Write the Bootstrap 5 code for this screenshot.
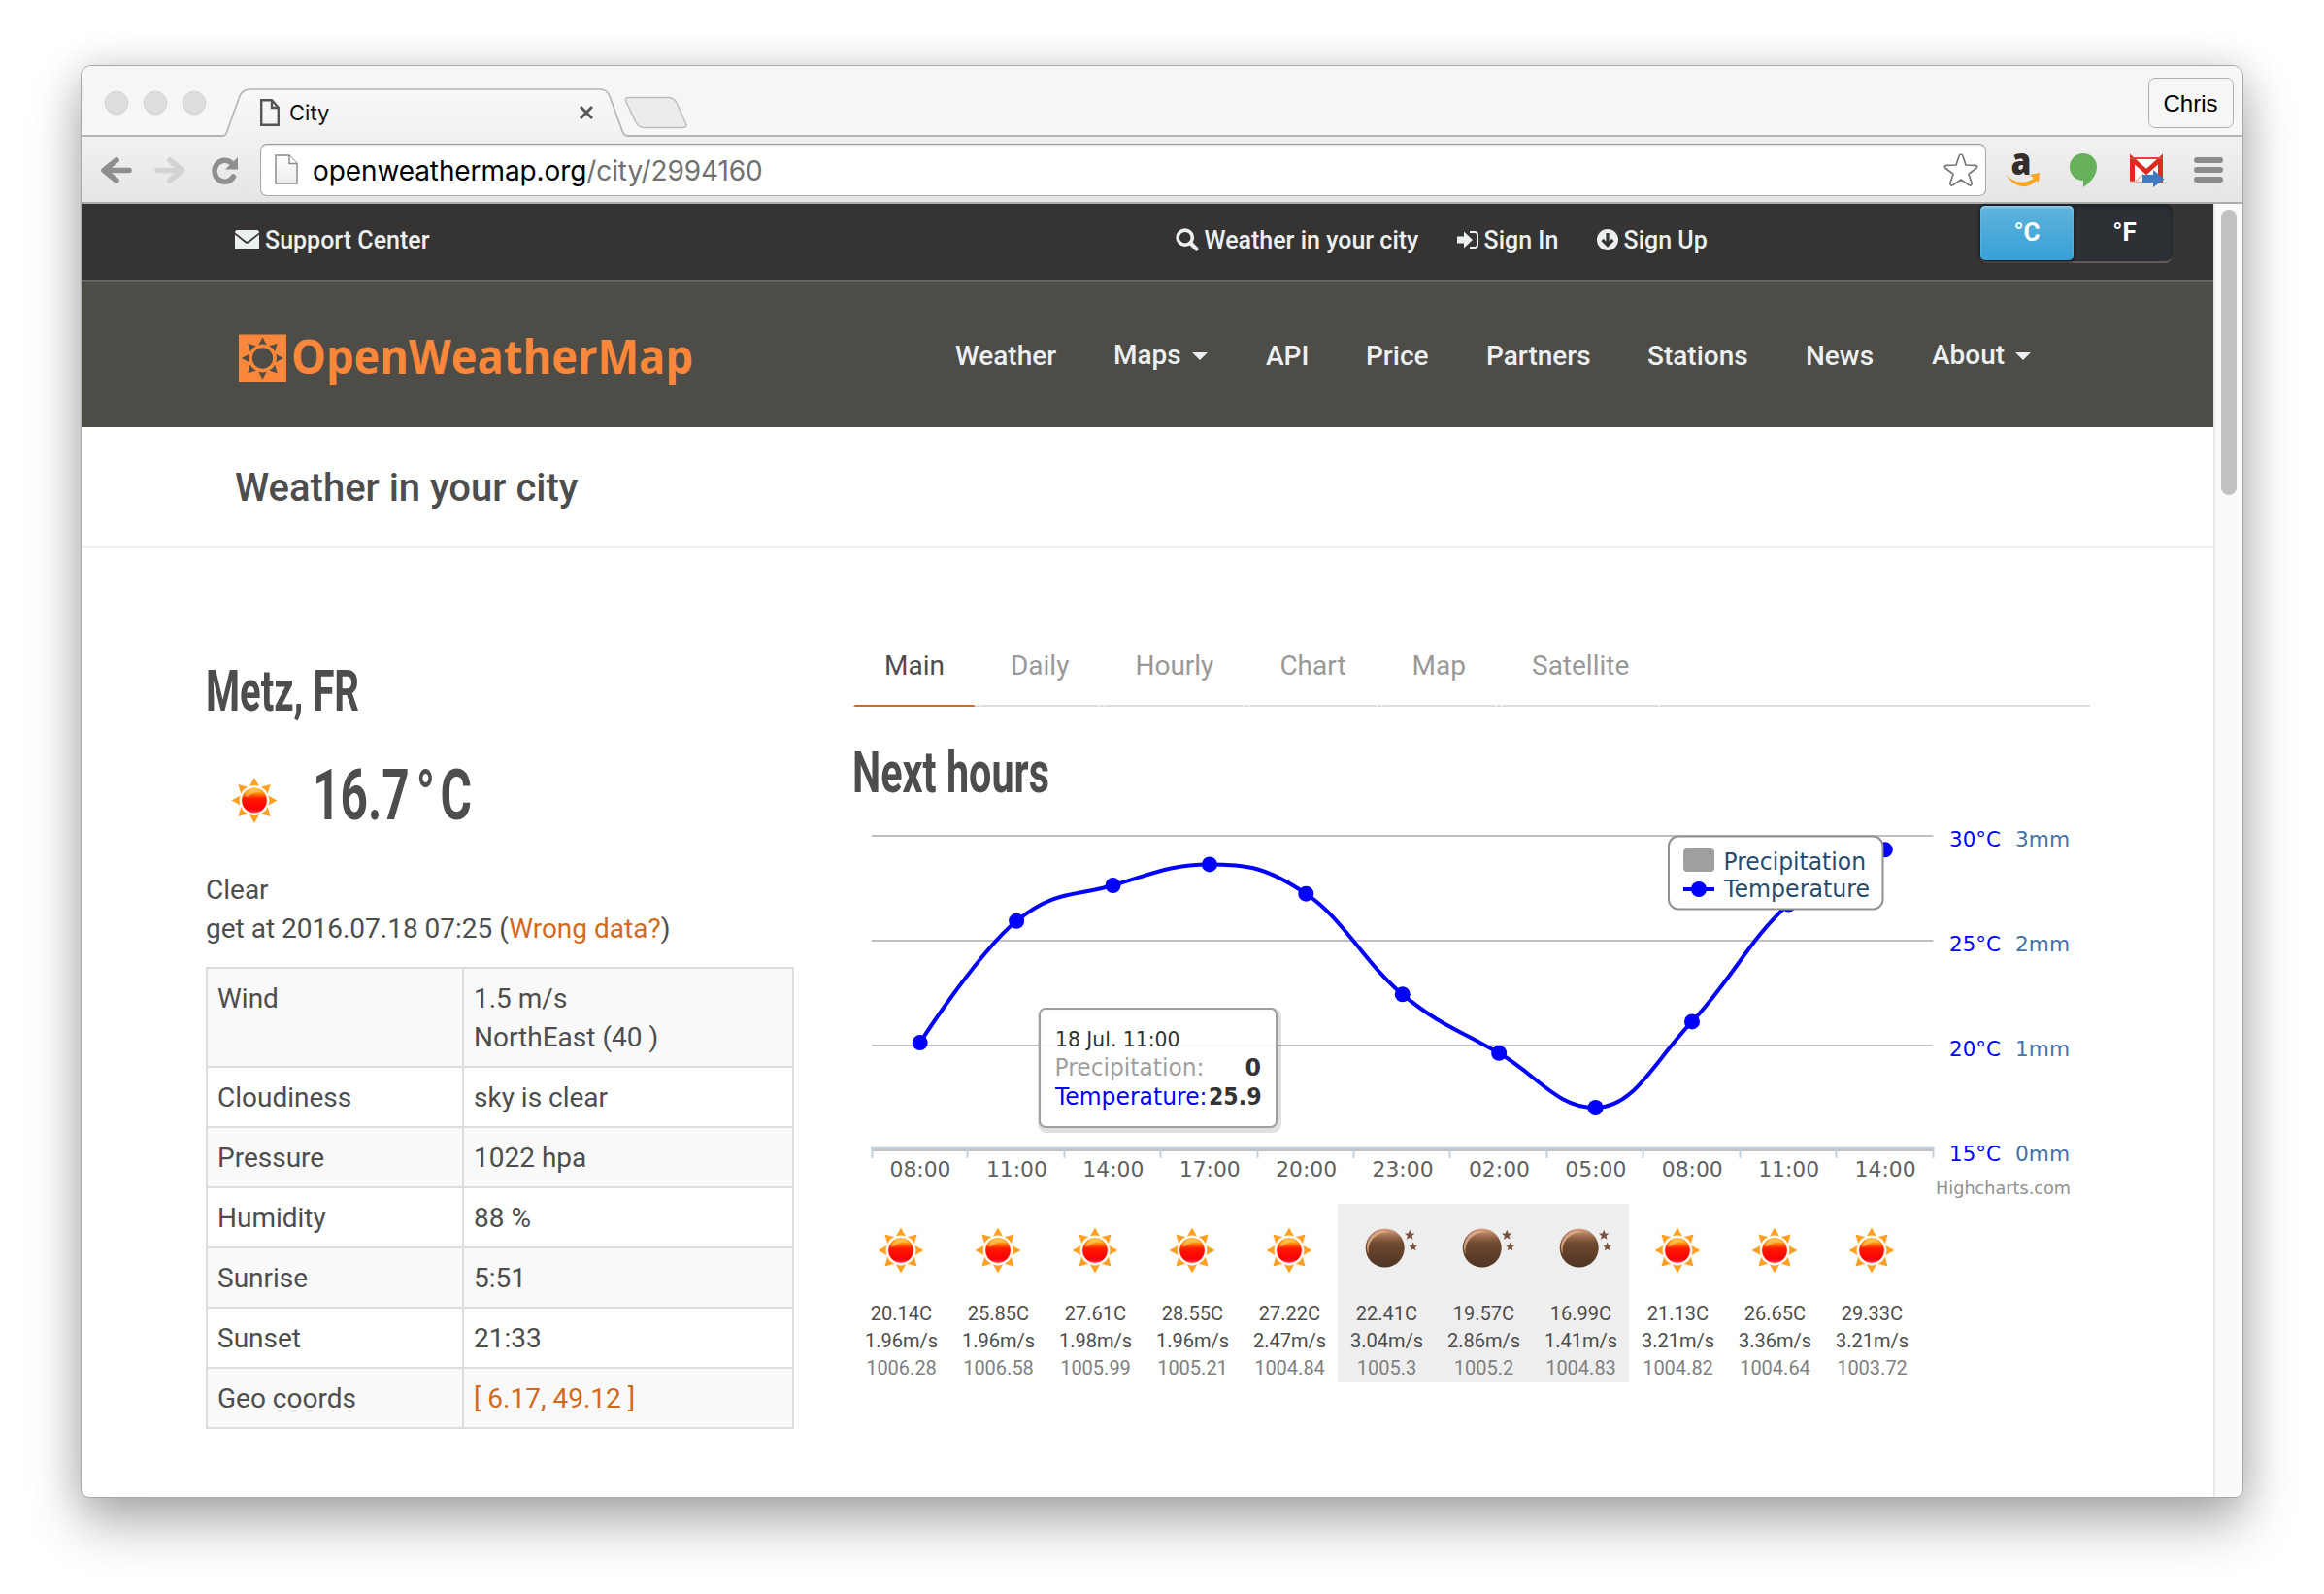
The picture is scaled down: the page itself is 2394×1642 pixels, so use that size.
<!DOCTYPE html>
<html lang="en">
<head>
<meta charset="utf-8">
<title>City</title>
<link href="https://cdn.jsdelivr.net/npm/bootstrap@5.3.0/dist/css/bootstrap.min.css" rel="stylesheet">
<style>
body{margin:0;background:#fff;width:2394px;height:1642px;overflow:hidden;padding:67px 83px 0 83px;font-family:Roboto,sans-serif;font-size:28px;line-height:40px;color:#4d4d4d}
svg{display:block;flex:none;overflow:visible}
a{text-decoration:none}
.win{width:2228px;height:1476px;border:1px solid #a9a9a9;border-radius:11px 11px 9px 9px;background:#fff;overflow:hidden;box-shadow:0 26px 54px rgba(0,0,0,.31),0 0 40px rgba(0,0,0,.12)}
.tabstrip{height:73px;background:#f6f6f6;border-bottom:2px solid #b3b3b3;position:relative}
.tabart{position:absolute;left:0;top:0}
.tabstrip .face{position:relative;padding:12px 9px 0 184px}
.docicon{margin-top:22px}
.tabtitle{font:22px/26px Inter,sans-serif;color:#111;margin:23px 0 0 10px}
.tabclose{margin:29px 0 0 257px}
.user{width:88px;height:52px;border:1.5px solid #b0b0b0;border-radius:7px;font:24px/52px "Liberation Sans",sans-serif;color:#000;text-align:center;padding-right:1px}
.toolbar{height:69px;border-bottom:2px solid #acacac;background:linear-gradient(#f1f1f1,#e5e5e5);padding:7px 18px 0 20px}
.omni{width:1778px;height:54px;border:1.5px solid #aaa;border-top-color:#999;border-radius:7px;background:#fff;padding:0 7px 0 14px;font-family:Inter,sans-serif;font-size:28px;color:#707070;box-shadow:inset 0 1px 2px rgba(0,0,0,.12)}
.omni b{font-weight:400;color:#000}
.url{margin-left:15px;letter-spacing:-.1px;line-height:50px;padding-top:1px}
.view{flex:1}
.pg{width:2196px}
.scroller{width:30px;border-left:2px solid #e8e8e8;background:#fafafa;padding:6px 0 0 6px}
.thumb{width:16px;height:294px;border-radius:8px;background:#c1c1c1}
.topbar{height:80px;background:#353432;border-bottom:2px solid #666;color:#ecf0f1;font-size:25px;font-weight:500;line-height:30px;padding-left:158px}
.topbar a,.mainnav a{color:#ecf0f1}
.topbar .ln{margin-top:22px;height:30px;white-space:nowrap}
.topbar .find{margin-left:768px}
.topbar .ln a{margin-left:6px;padding-top:2px}
.units{width:199px;height:61px;margin-left:auto;margin-right:42px;border-radius:8px;background:#2d3035;border-bottom:2px solid #5d5c5a;box-shadow:inset 0 3px 5px rgba(0,0,0,.3);font-size:26px;font-weight:700;color:#fff;padding:2px 0 0 1px}
.units span{line-height:55px;text-align:center}
.units .off{padding-left:3px}
.units .on{width:96px;height:56px;border-radius:5px;background:linear-gradient(#5fb3dc,#37a1d6);box-shadow:0 1px 4px #111,inset 0 2px 2px #8ccbe8}
.head{height:150px;background:#4d4c47;padding:54px 0 0 162px}
.mainnav{font-weight:500;font-size:28px;line-height:32px;height:32px;margin:7px 0 0 268px}
.mainnav a{flex:none;white-space:nowrap}
.mainnav a.drop{margin-top:-1px}
.caretd{display:inline-block;border:8px solid transparent;border-top-color:#ecf0f1;border-bottom:0;margin-left:11px;vertical-align:4px}
.titlebar{height:124px;border-bottom:2px solid #eee;padding-left:158px;font-size:40px;font-weight:500;line-height:126px;margin:0;color:#4d4d4d}
.left{width:606px;margin-left:128px}
.right{width:1274px;margin-left:61px}
.wtable{width:606px;margin:20px 0 0;color:#4d4d4d;border-collapse:collapse;--bs-table-bg:transparent}
.wtable td{border:2px solid #ddd;padding:11px 10px 9px;line-height:40px;background:#fff}
.wtable td:first-child{width:264px}
.wtable tr:nth-child(odd) td{background:#f9f9f9}
.orange,.wtable td.orange{color:#d26a1e}
.tabs{padding:0;margin:91px 0 0;list-style:none;border-bottom:2px solid #ddd;height:73px;color:#999}
.tabs li{padding:9px 30px 0;height:73px;margin-right:4px;line-height:40px;border:2px solid #fff;border-bottom-color:#ddd}
.tabs li.on{color:#4d4d4d;border-bottom-color:#d26a1e}
.cell{width:100px;height:184px;text-align:center;font-size:20px;line-height:28px;padding:24px 0 0 1px;white-space:nowrap;flex:none}
.cell.night{background:#eee}
.cell svg{margin:0 0 27px 25px}
.cell .pr{color:#808080}
svg text{white-space:pre}
</style>
<script src="https://cdn.jsdelivr.net/npm/bootstrap@5.3.0/dist/js/bootstrap.bundle.min.js"></script>
</head>
<body>
<svg width="0" height="0" class="position-absolute">
<defs>
<linearGradient id="sg" x1="0" y1="0" x2="0" y2="1"><stop offset="0" stop-color="#ffc040"/><stop offset=".22" stop-color="#ff8c08"/><stop offset=".42" stop-color="#ff1c00"/><stop offset=".85" stop-color="#fb0006"/><stop offset="1" stop-color="#ff3a5c"/></linearGradient>
<linearGradient id="mg" x1="0" y1="0" x2="0" y2="1"><stop offset="0" stop-color="#d7a17e"/><stop offset=".22" stop-color="#96664a"/><stop offset=".38" stop-color="#70492f"/><stop offset="1" stop-color="#4f3423"/></linearGradient>
<linearGradient id="fold" x1="0" y1="0" x2="0" y2="1"><stop offset="0" stop-color="#fff"/><stop offset="1" stop-color="#ececec"/></linearGradient>
<linearGradient id="tb" x1="0" y1="0" x2="0" y2="1"><stop offset="0" stop-color="#f8f8f8"/><stop offset="1" stop-color="#f1f1f1"/></linearGradient>
<symbol id="sun" viewBox="-24 -24 48 48" overflow="visible">
<g fill="#ff9f20"><path id="ray" d="M0-23.500L5-14.400Q0-16.400-5-14.400Z"/><use href="#ray" transform="rotate(45)"/><use href="#ray" transform="rotate(90)"/><use href="#ray" transform="rotate(135)"/><use href="#ray" transform="rotate(180)"/><use href="#ray" transform="rotate(225)"/><use href="#ray" transform="rotate(270)"/><use href="#ray" transform="rotate(315)"/></g>
<circle r="13.600" fill="#ffdcc0"/><circle r="12.800" fill="url(#sg)"/><path d="M-10-4Q-8-11 0-11.500Q6-11 8-8Q0-10-7-4Z" fill="#ffe08a" opacity=".45"/>
</symbol>
<symbol id="moon" viewBox="-24 -24 48 48" overflow="visible">
<circle cx="-1.300" cy="-2.400" r="20" fill="url(#mg)"/><path d="M-18 5A17 17 0 0 1 4-18.500A19.300 19.300 0 0 0-18 5Z" fill="#e3b493" opacity=".8"/>
<g fill="#76503a"><path id="st" d="M24.200-21.200L25.700-17.600L29.400-17.400L26.500-15L27.500-11.200L24.200-13.300L20.900-11.200L21.900-15L19-17.400L22.700-17.600Z"/><use href="#st" transform="translate(6.600 10) scale(.87)"/></g>
</symbol>
</defs>
</svg>

<div class="win d-flex flex-column">
  <div class="tabstrip flex-shrink-0">
    <svg class="tabart" width="640" height="75" viewBox="84 68 640 75">
      <g fill="#dedede" stroke="#cfcfcf"><circle cx="120" cy="106" r="11.700"/><circle cx="160" cy="106" r="11.700"/><circle cx="200" cy="106" r="11.700"/></g>
      <path d="M228 141C233 141 233 138 235 132L247 99Q250 92 258 92H618Q625 92 628 99L640 132C642 138 643 141 649 141V143.500H228Z" fill="url(#tb)"/>
      <path d="M226 140.500C233 140.500 233 138 235 132L247 99Q250 92 258 92H618Q625 92 628 99L640 132C642 138 643 140.500 649 140.500" fill="none" stroke="#b5b5b5" stroke-width="1.700"/>
      <path d="M648 100.500H688Q694 100.500 697 106L706 126Q709 131.500 703 131.500H664Q658 131.500 655 126L645 105Q643 100.500 648 100.500Z" fill="#ececec" stroke="#bdbdbd" stroke-width="1.500"/>
    </svg>
    <div class="face d-flex align-items-start">
      <svg class="docicon" width="20" height="28" viewBox="0 0 20 28"><path d="M1.200 1.200H12L18.800 9V26.800H1.200ZM12 1.200V9H18.800" fill="none" stroke="#555" stroke-width="2.400"/></svg>
      <span class="tabtitle">City</span>
      <svg class="tabclose" width="16" height="14" viewBox="0 0 16 14"><path d="M2 1L14 13M14 1L2 13" stroke="#5a5a5a" stroke-width="3"/></svg>
      <div class="user ms-auto">Chris</div>
    </div>
  </div>
  <div class="toolbar d-flex align-items-start flex-shrink-0">
    <svg width="164" height="54" viewBox="104 148 164 54">
      <path d="M120 165L107 175.500L120 186M108 175.500H133" fill="none" stroke="#8f8f8f" stroke-width="5.600" stroke-linecap="round" stroke-linejoin="round"/>
      <path d="M175 165L188 175.500L175 186M187 175.500H162" fill="none" stroke="#d3d3d3" stroke-width="5.600" stroke-linecap="round" stroke-linejoin="round"/>
      <path d="M238.500 168A10.500 11 0 1 0 240.500 182" fill="none" stroke="#8f8f8f" stroke-width="5.500" stroke-linecap="round"/><path d="M245 162V174.500H232Z" fill="#8f8f8f"/>
    </svg>
    <div class="omni d-flex align-items-center">
      <svg width="24" height="32" viewBox="0 0 24 32"><path d="M1 1H15L23 9.500V30H1Z" fill="url(#fold)" stroke="#8c8c8c" stroke-width="1.500"/><path d="M15 1V9.500H23" fill="#fff" stroke="#8c8c8c" stroke-width="1.500"/></svg>
      <span class="url"><b>openweathermap.org</b>/city/2994160</span>
      <svg class="ms-auto" width="36" height="36" viewBox="0 0 36 36"><path d="M18 2Q19.500 2 20 4L23 13L32.500 13.300Q36.500 13.800 33.500 16.500L26 22.300L29 31.500Q29.500 35 26 33.500L18 28L10 33.500Q6.500 35 7 31.500L10 22.300L2.500 16.500Q-.5 13.800 3.500 13.300L13 13L16 4Q16.500 2 18 2Z" fill="#fff" stroke="#777" stroke-width="1.700"/></svg>
    </div>
    <svg width="246" height="54" viewBox="2046 148 246 54">
      <text x="2071.500" y="180" font-family="Open Sans,sans-serif" font-weight="800" font-size="39" fill="#332d2d" textLength="21" lengthAdjust="spacingAndGlyphs">a</text>
      <path d="M2066 180Q2080 193 2095 184L2091 180L2101 178L2100 188L2098 186Q2081 201 2066 180Z" fill="#f9a51f"/>
      <path d="M2146 158A14 14 0 0 1 2160 172C2160 181 2153 188 2146 193V186A14 14 0 0 1 2146 158Z" fill="#68b15b"/>
      <rect x="2194" y="162" width="34" height="26" fill="#fff"/><path d="M2196.500 188V164L2211 177L2225.500 164V188" fill="none" stroke="#e02a20" stroke-width="5"/><path d="M2194 163H2228" stroke="#e0443a" stroke-width="2"/><path d="M2199 187.500L2208 179M2194 187.300H2208" stroke="#e8b5b0" stroke-width="1.500"/>
      <path d="M2207 180H2218V175L2229.500 184.500L2218 193V188H2207Z" fill="#4179c0"/>
      <g fill="#8b8b8b"><rect x="2260" y="162" width="30" height="6" rx="3"/><rect x="2260" y="172" width="30" height="6" rx="3"/><rect x="2260" y="182" width="30" height="6" rx="3"/></g>
    </svg>
  </div>

  <div class="view d-flex">
    <div class="pg">
      <div class="topbar d-flex">
        <div class="ln d-flex align-items-center">
          <svg width="25" height="20" viewBox="0 0 25 20"><path d="M0 4.500V18Q0 20 2 20H23Q25 20 25 18V4.500L14.500 13Q12.500 14.300 10.500 13Z" fill="#ecf0f1"/><path d="M2 0H23Q25 0 25 2.500L14 11Q12.500 12 11 11L0 2.500Q0 0 2 0Z" fill="#ecf0f1"/></svg>
          <a href="#">Support Center</a>
        </div>
        <div class="ln find d-flex align-items-center">
          <svg width="24" height="24" viewBox="0 0 24 24"><circle cx="9.700" cy="9.700" r="7.600" fill="none" stroke="#ecf0f1" stroke-width="3.600"/><path d="M15.500 15.500L21.500 21.500" stroke="#ecf0f1" stroke-width="4.200" stroke-linecap="round"/></svg>
          <a href="#" style="width:260px">Weather in your city</a>
          <svg width="22" height="18" viewBox="0 0 22 18"><path d="M0 5.500H7V.5L16 9L7 17.500V12.500H0Z" fill="#ecf0f1"/><path d="M13 1H18Q21 1 21 4V14Q21 17 18 17H13" fill="none" stroke="#ecf0f1" stroke-width="2"/></svg>
          <a href="#" style="width:116px">Sign In</a>
          <svg width="22" height="22" viewBox="0 0 22 22"><circle cx="11" cy="11" r="11" fill="#ecf0f1"/><path d="M11 4V15M5.500 11L11 16.500L16.500 11" fill="none" stroke="#353432" stroke-width="3.200"/></svg>
          <a href="#">Sign Up</a>
        </div>
        <div class="units d-flex"><span class="on">°C</span><span class="off flex-fill">°F</span></div>
      </div>
      <div class="head d-flex">
        <svg width="470" height="60" viewBox="246 344 470 60">
          <rect x="246" y="344.500" width="49" height="49" fill="#fa873a"/>
          <g transform="translate(270.500 369)"><g fill="#4d4c47"><circle r="10.700"/><path id="lr" d="M0-21.500L4.300-13.500Q0-15.500-4.300-13.500Z"/><use href="#lr" transform="rotate(45)"/><use href="#lr" transform="rotate(90)"/><use href="#lr" transform="rotate(135)"/><use href="#lr" transform="rotate(180)"/><use href="#lr" transform="rotate(225)"/><use href="#lr" transform="rotate(270)"/><use href="#lr" transform="rotate(315)"/></g></g>
          <text x="300" y="385" font-family="Open Sans,sans-serif" font-weight="700" font-size="48" fill="#fa873a" textLength="414" lengthAdjust="spacingAndGlyphs">OpenWeatherMap</text>
        </svg>
        <nav class="mainnav d-flex">
          <a href="#" style="width:163px">Weather</a><a href="#" class="drop" style="width:157px">Maps<i class="caretd"></i></a><a href="#" style="width:103px">API</a><a href="#" style="width:124px">Price</a><a href="#" style="width:166px">Partners</a><a href="#" style="width:163px">Stations</a><a href="#" style="width:130px">News</a><a href="#" class="drop">About<i class="caretd"></i></a>
        </nav>
      </div>
      <h1 class="titlebar">Weather in your city</h1>
      <div class="d-flex">
        <section class="left">
          <svg width="200" height="60" viewBox="212 680 200 60" style="margin-top:116px"><text x="212" y="731.700" font-weight="700" font-size="58.500" fill="#4d4d4d" textLength="158" lengthAdjust="spacingAndGlyphs">Metz, FR</text></svg>
          <svg width="300" height="90" viewBox="212 780 300 90" style="margin-top:40px"><use href="#sun" x="238" y="800.500" width="48" height="48"/><text x="322" y="844" dx="0 0 0 0 0 -8 8" font-weight="700" font-size="73" fill="#4d4d4d" textLength="164" lengthAdjust="spacingAndGlyphs">16.7 °C</text></svg>
          <div style="margin-top:27px;margin-bottom:-1px">Clear<br>get at 2016.07.18 07:25 (<a class="orange" href="#">Wrong data?</a>)</div>
          <table class="table wtable">
            <tr><td>Wind</td><td>1.5 m/s<br>NorthEast (40 )</td></tr>
            <tr><td>Cloudiness</td><td>sky is clear</td></tr>
            <tr><td>Pressure</td><td>1022 hpa</td></tr>
            <tr><td>Humidity</td><td>88 %</td></tr>
            <tr><td>Sunrise</td><td>5:51</td></tr>
            <tr><td>Sunset</td><td>21:33</td></tr>
            <tr><td>Geo coords</td><td class="orange">[ 6.17, 49.12 ]</td></tr>
          </table>
        </section>
        <section class="right">
          <ul class="tabs d-flex"><li class="on">Main</li><li>Daily</li><li>Hourly</li><li>Chart</li><li>Map</li><li>Satellite</li></ul>
          <svg width="260" height="72" viewBox="879 760 260 72" style="margin-top:32px"><text x="878" y="815.700" font-weight="700" font-size="58.500" fill="#4d4d4d" textLength="203" lengthAdjust="spacingAndGlyphs">Next hours</text></svg>
          <svg id="chart" width="1274" height="408" viewBox="879 832 1274 408" font-family="DejaVu Sans,sans-serif"></svg>
          <div id="hours" class="d-flex" style="margin-left:-1px"></div>
        </section>
      </div>
    </div>
    <div class="scroller"><div class="thumb"></div></div>
  </div>
</div>
<script>
const hours=[['08:00',20.14,1.96,1006.28],['11:00',25.85,1.96,1006.58],['14:00',27.61,1.98,1005.99],['17:00',28.55,1.96,1005.21],['20:00',27.22,2.47,1004.84],['23:00',22.41,3.04,1005.3,1],['02:00',19.57,2.86,1005.2,1],['05:00',16.99,1.41,1004.83,1],['08:00',21.13,3.21,1004.82],['11:00',26.65,3.36,1004.64],['14:00',29.33,3.21,1003.72]];
document.getElementById('hours').innerHTML=hours.map(h=>`<div class="cell${h[4]?' night':''}"><svg width="48" height="48"><use href="#${h[4]?'moon':'sun'}" width="48" height="48"/></svg><div>${h[1].toFixed(2)}C</div><div>${h[2]}m/s</div><div class="pr">${h[3]}</div></div>`).join('');
const L=898,R=1991.5,step=(R-L)/11,Y=t=>1184.2-(Math.round(t*10)/10-15)*21.6;
const P=hours.map((h,i)=>[L+step*(i+.5),Y(h[1])]);
// smoothed spline through the hourly points
let d='M'+P[0],pc=P[0];
for(let i=1;i<P.length;i++){
  const [x,y]=P[i],a=P[i-1],b=P[i+1];let l=[x,y],r=[x,y];
  if(b){
    l=[(1.5*x+a[0])/2.5,(1.5*y+a[1])/2.5];r=[(1.5*x+b[0])/2.5,(1.5*y+b[1])/2.5];
    const c=(r[1]-l[1])*(r[0]-x)/(r[0]-l[0])+y-r[1];l[1]+=c;r[1]+=c;
    if(l[1]>a[1]&&l[1]>y){l[1]=Math.max(a[1],y);r[1]=2*y-l[1]}else if(l[1]<a[1]&&l[1]<y){l[1]=Math.min(a[1],y);r[1]=2*y-l[1]}
    if(r[1]>b[1]&&r[1]>y){r[1]=Math.max(b[1],y);l[1]=2*y-r[1]}else if(r[1]<b[1]&&r[1]<y){r[1]=Math.min(b[1],y);l[1]=2*y-r[1]}
  }
  d+=`C${pc} ${l} ${x},${y}`;pc=r;
}
const T=(x,y,s,f,len,t,e='')=>`<text x="${x}" y="${y}" font-size="${s}" fill="${f}" textLength="${len}" lengthAdjust="spacingAndGlyphs" ${e}>${t}</text>`;
let s='';
for(let i=0;i<4;i++){const y=861+108*i;
  s+=`<path d="M${L} ${y}H${R}" stroke="#c0c0c0" stroke-width="2"/>`+T(2008,y+10.5,22,'#0000ff',53,(30-5*i)+'°C')+T(2076,y+10.5,22,'#4572a7',56,(3-i)+'mm');}
s+=`<path d="M${L-1} 1183H${R+1}" stroke="#c0d0e0" stroke-width="2.5"/>`;
for(let i=0;i<12;i++){const x=L+Math.round(step*i)-.5+(i?0:1);s+=`<path d="M${x} 1183V1193" stroke="#c0d0e0" stroke-width="2"/>`;}
P.forEach((p,i)=>s+=T(p[0]-31.2,1212,22,'#606060',63,hours[i][0]));
s+=`<path d="${d}" fill="none" stroke="#00f" stroke-width="4"/>`;
P.forEach(p=>s+=`<circle cx="${p[0]}" cy="${p[1]}" r="8" fill="#00f"/>`);
s+=`<rect x="1719" y="861.5" width="220.500" height="75" rx="10" fill="#fff" stroke="#909090" stroke-width="2"/><rect x="1734" y="874" width="32" height="24" rx="4" fill="#9f9f9f"/><path d="M1734 916H1766" stroke="#00f" stroke-width="4"/><circle cx="1750" cy="916" r="8" fill="#00f"/>`
+T(1775.5,896,24,'#274b6d',146.5,'Precipitation')+T(1776,924,24,'#274b6d',150,'Temperature');
s+=`<rect x="1072" y="1041" width="245" height="123" rx="6" fill="none" stroke="#000" stroke-opacity=".12" stroke-width="6"/><rect x="1071" y="1039" width="244" height="122" rx="6" fill="#fff" fill-opacity=".9" stroke="#9f9f9f" stroke-width="2"/>`
+T(1087,1078,20.5,'#333',128.5,'18 Jul. 11:00')+T(1086.5,1107.7,24,'#9f9f9f',154,'Precipitation:')+T(1282.5,1107.7,24,'#333',16.5,'0','font-weight="700"')+T(1087,1137.5,24,'#00f',156.5,'Temperature:')+T(1245,1137.5,24,'#333',54.5,'25.9','font-weight="700"');
s+=T(1994,1229.6,18.5,'#909090',139,'Highcharts.com');
document.getElementById('chart').innerHTML=s;
</script>
</body>
</html>
